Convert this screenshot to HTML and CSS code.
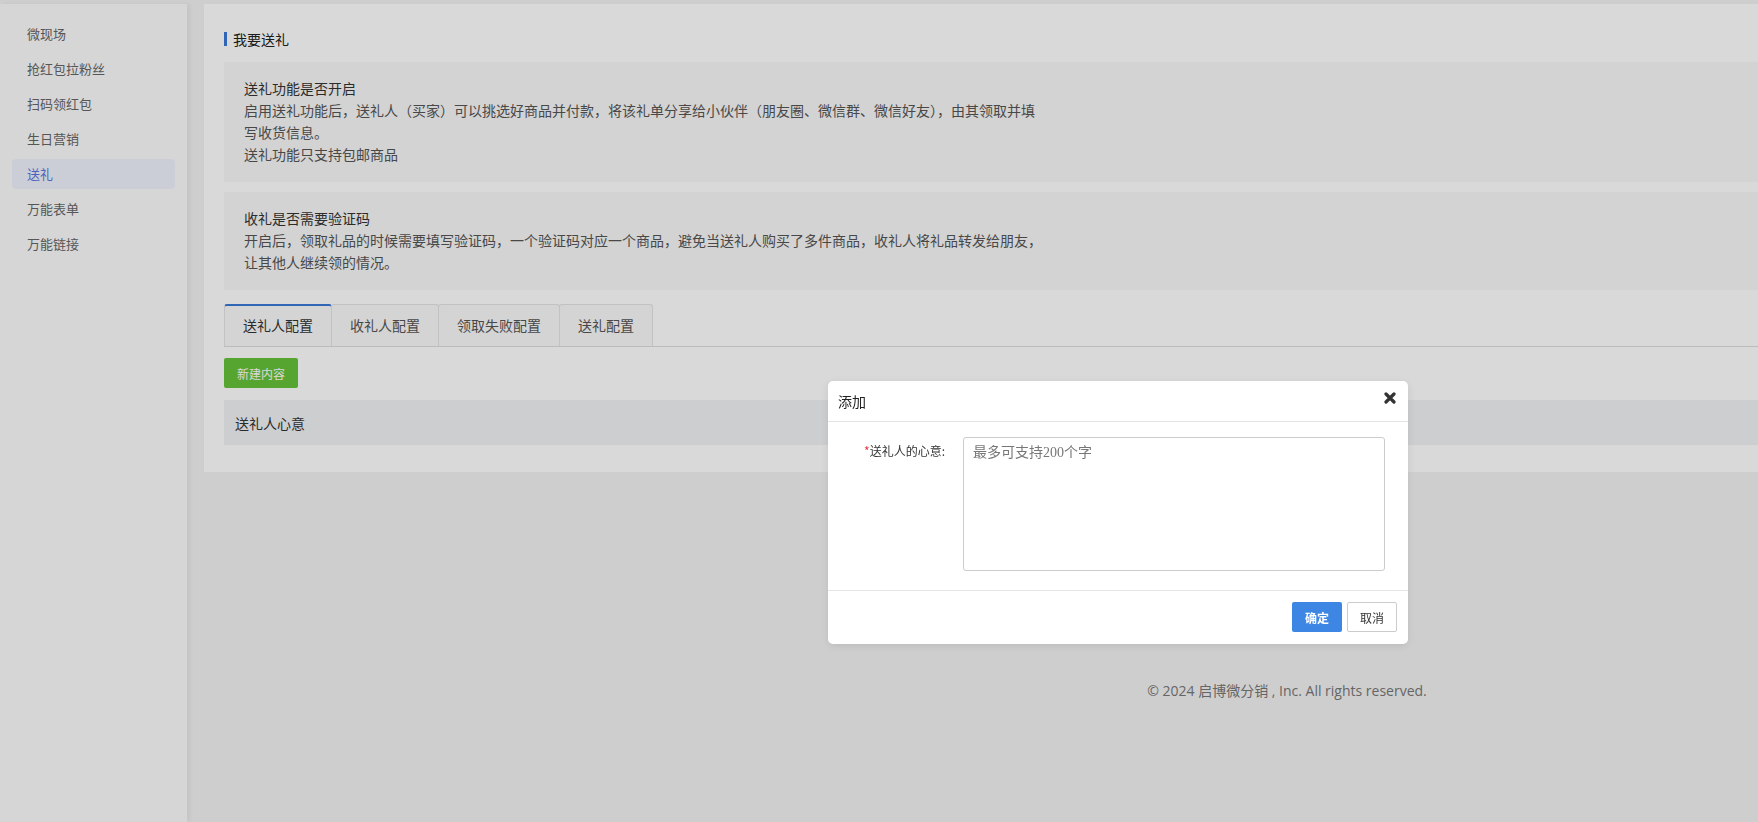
FILE: index.html
```html
<!DOCTYPE html>
<html lang="zh-CN">
<head>
    <meta charset="UTF-8">
    <meta name="viewport" content="width=device-width, initial-scale=1.0">
    <title>送礼 - 启博微分销</title>
    <link rel="stylesheet" href="styles.css">
</head>
<body>
    <div class="layout">
        <aside class="sidebar">
            <ul class="side-menu">
                <li><a href="#">微现场</a></li>
                <li><a href="#">抢红包拉粉丝</a></li>
                <li><a href="#">扫码领红包</a></li>
                <li><a href="#">生日营销</a></li>
                <li><a href="#" class="active">送礼</a></li>
                <li><a href="#">万能表单</a></li>
                <li><a href="#">万能链接</a></li>
            </ul>
        </aside>

        <div class="main">
            <section class="panel">
                <h2 class="panel-title">我要送礼</h2>

                <div class="tip">
                    <p class="tip-title">送礼功能是否开启</p>
                    <p>启用送礼功能后，送礼人（买家）可以挑选好商品并付款，将该礼单分享给小伙伴（朋友圈、微信群、微信好友），由其领取并填<br>写收货信息。</p>
                    <p>送礼功能只支持包邮商品</p>
                </div>

                <div class="tip">
                    <p class="tip-title">收礼是否需要验证码</p>
                    <p>开启后，领取礼品的时候需要填写验证码，一个验证码对应一个商品，避免当送礼人购买了多件商品，收礼人将礼品转发给朋友，<br>让其他人继续领的情况。</p>
                </div>

                <ul class="tabs">
                    <li class="tab active">送礼人配置</li>
                    <li class="tab">收礼人配置</li>
                    <li class="tab">领取失败配置</li>
                    <li class="tab">送礼配置</li>
                </ul>

                <button class="btn btn-success">新建内容</button>

                <table class="data-table">
                    <thead>
                        <tr><th>送礼人心意</th></tr>
                    </thead>
                    <tbody></tbody>
                </table>
            </section>

            <footer class="footer">© 2024 启博微分销 , Inc. All rights reserved.</footer>
        </div>
    </div>

    <!-- add dialog -->
    <div class="mask"></div>
    <div class="dialog">
        <div class="dialog-header">
            <span class="dialog-title">添加</span>
            <span class="dialog-close">
                <svg width="12" height="12" viewBox="0 0 12 12">
                    <path d="M2 2 L10 10 M10 2 L2 10" stroke="#333" stroke-width="3.2" stroke-linecap="round"/>
                </svg>
            </span>
        </div>
        <div class="dialog-body">
            <label class="form-label"><em>*</em>送礼人的心意:</label>
            <textarea class="form-textarea" placeholder="最多可支持200个字"></textarea>
        </div>
        <div class="dialog-footer">
            <button class="btn btn-primary">确定</button>
            <button class="btn btn-default">取消</button>
        </div>
    </div>
</body>
</html>
```

FILE: styles.css
```css
/* Base */
:root {
    --blue: #3a78d8;
    --green: #67c23a;
    --text: #333;
    --text-light: #555;
    --bg: #f3f3f3;
}

* {
    margin: 0;
    padding: 0;
    box-sizing: border-box;
}

body {
    font-family: "Noto Sans CJK SC", "Liberation Sans", sans-serif;
    background: var(--bg);
    color: var(--text);
    font-size: 14px;
    overflow: hidden;
}

ul {
    list-style: none;
}

.layout {
    display: flex;
    align-items: flex-start;
    padding-top: 4px;
    min-height: 100vh;
}

/* Sidebar */
.sidebar {
    width: 187px;
    flex-shrink: 0;
    min-height: calc(100vh - 4px);
    padding: 15px 12px;
    background: #fcfcfc;
    box-shadow: 3px 0 5px rgba(0, 0, 0, 0.05);
}

.side-menu a {
    display: block;
    height: 30px;
    line-height: 30px;
    padding: 0 15px;
    margin-bottom: 5px;
    font-size: 13px;
    color: #666;
    text-decoration: none;
    border-radius: 4px;
}

.side-menu a.active {
    background: #f0f3fd;
    color: #5b74e0;
}

/* Main column */
.main {
    width: 2166px;
    flex-shrink: 0;
    margin-left: 17px;
}

.panel {
    background: #fff;
    padding: 24px 20px 27px;
}

.panel-title {
    display: flex;
    align-items: center;
    font-size: 14px;
    font-weight: 400;
    line-height: 22px;
    color: #222;
    margin-bottom: 12px;
}

.panel-title::before {
    content: "";
    width: 3px;
    height: 14px;
    margin-right: 6px;
    background: var(--blue);
}

.tip {
    background: #f8f8f8;
    padding: 15px 20px 17px;
    line-height: 22px;
    color: var(--text-light);
}

.tip + .tip {
    margin-top: 10px;
}

.tip-title {
    color: #333;
}

/* Tabs */
.tabs {
    display: flex;
    margin-top: 14px;
    border-bottom: 1px solid #ddd;
}

.tab {
    height: 42px;
    line-height: 40px;
    padding: 0 18px;
    background: #fafafa;
    border: 1px solid #e4e4e4;
    border-bottom: none;
    border-radius: 3px 3px 0 0;
    color: var(--text-light);
}

.tab + .tab {
    margin-left: -1px;
}

.tab.active {
    border-top: 2px solid var(--blue);
    line-height: 39px;
    color: var(--text);
}

/* Buttons */
.btn {
    height: 30px;
    padding: 0 12px;
    font-family: inherit;
    font-size: 12px;
    border: 1px solid transparent;
    border-radius: 2px;
    cursor: pointer;
}

.btn-success {
    margin-top: 11px;
    padding: 0 12px;
    background: var(--green);
    color: #fff;
}

.btn-primary {
    background: #3e86e4;
    color: #fff;
    font-weight: 700;
}

.btn-default {
    background: #fff;
    border-color: #ccc;
    color: var(--text);
}

/* Table */
.data-table {
    width: 100%;
    margin-top: 12px;
    border-collapse: collapse;
}

.data-table th {
    height: 45px;
    padding-left: 11px;
    text-align: left;
    font-weight: 400;
    background: #f1f2f5;
    color: var(--text);
}

.footer {
    padding-top: 209px;
    text-align: center;
    font-family: "Open Sans", "Noto Sans CJK SC", sans-serif;
    font-size: 14px;
    line-height: 20px;
    color: #777;
}

/* Dialog */
.mask {
    position: fixed;
    inset: 0;
    background: rgba(0, 0, 0, 0.15);
}

.dialog {
    position: fixed;
    left: 828px;
    top: 381px;
    width: 580px;
    background: #fff;
    border-radius: 5px;
    box-shadow: 0 2px 10px rgba(0, 0, 0, 0.1);
}

.dialog-header {
    display: flex;
    justify-content: space-between;
    align-items: center;
    height: 41px;
    padding: 0 12px 0 10px;
    border-bottom: 1px solid #e5e5e5;
}

.dialog-title {
    font-size: 14px;
    color: #222;
}

.dialog-close {
    display: flex;
    margin-top: -7px;
    cursor: pointer;
}

.dialog-body {
    display: flex;
    align-items: flex-start;
    padding: 15px 0 19px;
}

.form-label {
    width: 117px;
    margin-right: 18px;
    text-align: right;
    font-size: 12px;
    line-height: 28px;
    color: var(--text);
}

.form-label em {
    font-style: normal;
    color: #e4393c;
}

.form-textarea {
    width: 422px;
    height: 134px;
    padding: 5px 9px;
    font-family: "Liberation Serif", "Noto Sans CJK SC", serif;
    font-size: 14px;
    line-height: 20px;
    border: 1px solid #ccc;
    border-radius: 3px;
    resize: none;
    outline: none;
}

.form-textarea::placeholder {
    color: #777;
}

.dialog-footer {
    display: flex;
    justify-content: flex-end;
    gap: 5px;
    padding: 11px 11px 12px;
    border-top: 1px solid #e5e5e5;
}
```
